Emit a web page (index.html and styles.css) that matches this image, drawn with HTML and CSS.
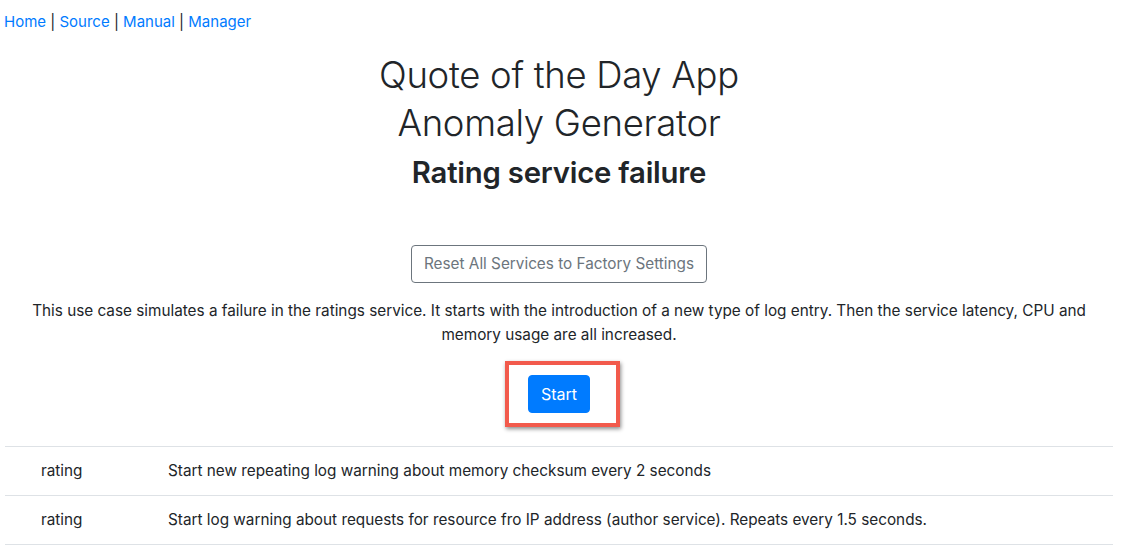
FILE: index.html
```html
<!DOCTYPE html>
<html>
<head>
<meta charset="utf-8">
<link rel="stylesheet" href="styles.css">
</head>
<body>
<div class="page">
  <nav class="nav">
    <a href="#">Home</a> | <a href="#">Source</a> | <a href="#">Manual</a> | <a href="#">Manager</a>
  </nav>
  <h1 class="title">Quote of the Day App<br>Anomaly Generator</h1>
  <h3 class="subtitle">Rating service failure</h3>
  <div class="reset-row">
    <button class="btn btn-outline">Reset All Services to Factory Settings</button>
  </div>
  <p class="desc">This use case simulates a failure in the ratings service. It starts with the introduction of a new type of log entry. Then the service latency, CPU and memory usage are all increased.</p>
  <div class="start-row">
    <div class="highlight">
      <button class="btn btn-primary">Start</button>
    </div>
  </div>
  <table class="steps">
    <tr><td class="svc">rating</td><td>Start new repeating log warning about memory checksum every 2 seconds</td></tr>
    <tr><td class="svc">rating</td><td>Start log warning about requests for resource fro IP address (author service). Repeats every 1.5 seconds.</td></tr>
  </table>
</div>
</body>
</html>
```

FILE: styles.css
```css
html, body {
  margin: 0;
  padding: 0;
  background: #fff;
}
body {
  font-family: Inter, "Noto Sans", "Liberation Sans", sans-serif;
  font-size: 15.3px;
  line-height: 24px;
  color: #212529;
}
.page {
  width: 1108px;
  margin-left: 5px;
  padding-top: 10px;
}
.nav {
  font-size: 15px;
  line-height: 24px;
  margin-left: -1px;
}
.nav a {
  color: #007bff;
  text-decoration: none;
}
.title {
  margin: 17px 0 0;
  text-align: center;
  font-size: 36.5px;
  font-weight: 300;
  line-height: 48px;
  letter-spacing: -0.3px;
}
.subtitle {
  margin: 9px 0 0;
  text-align: center;
  font-size: 29.3px;
  font-weight: 600;
  line-height: 34px;
  letter-spacing: -0.2px;
}
.reset-row {
  display: flex;
  justify-content: center;
  margin-top: 55px;
}
.btn {
  font-family: inherit;
  font-size: 15.3px;
  line-height: 24px;
  padding: 6px 12px;
  border-radius: 4px;
  border: 1px solid transparent;
  background: none;
  cursor: pointer;
}
.btn-outline {
  color: #6c757d;
  border-color: #6c757d;
}
.btn-primary {
  color: #fff;
  background: #007bff;
  border-color: #007bff;
  font-size: 16px;
}
.desc {
  margin: 16px 0 0;
  text-align: center;
}
.start-row {
  display: flex;
  justify-content: center;
  margin-top: 14px;
}
.highlight {
  border: 4px solid #f25a4c;
  padding: 10px 26px 10px 19px;
  box-shadow: 1px 2px 4px rgba(0,0,0,0.45);
  margin-left: 7px;
}
.steps {
  width: 100%;
  border-collapse: collapse;
  margin-top: 19px;
}
.steps td {
  border-top: 1px solid #dee2e6;
  padding: 12px;
  line-height: 24px;
  vertical-align: top;
}
.steps tr:last-child td {
  border-bottom: 1px solid #dee2e6;
}
.steps td.svc {
  padding-left: 36px;
  width: 103px;
}
```
